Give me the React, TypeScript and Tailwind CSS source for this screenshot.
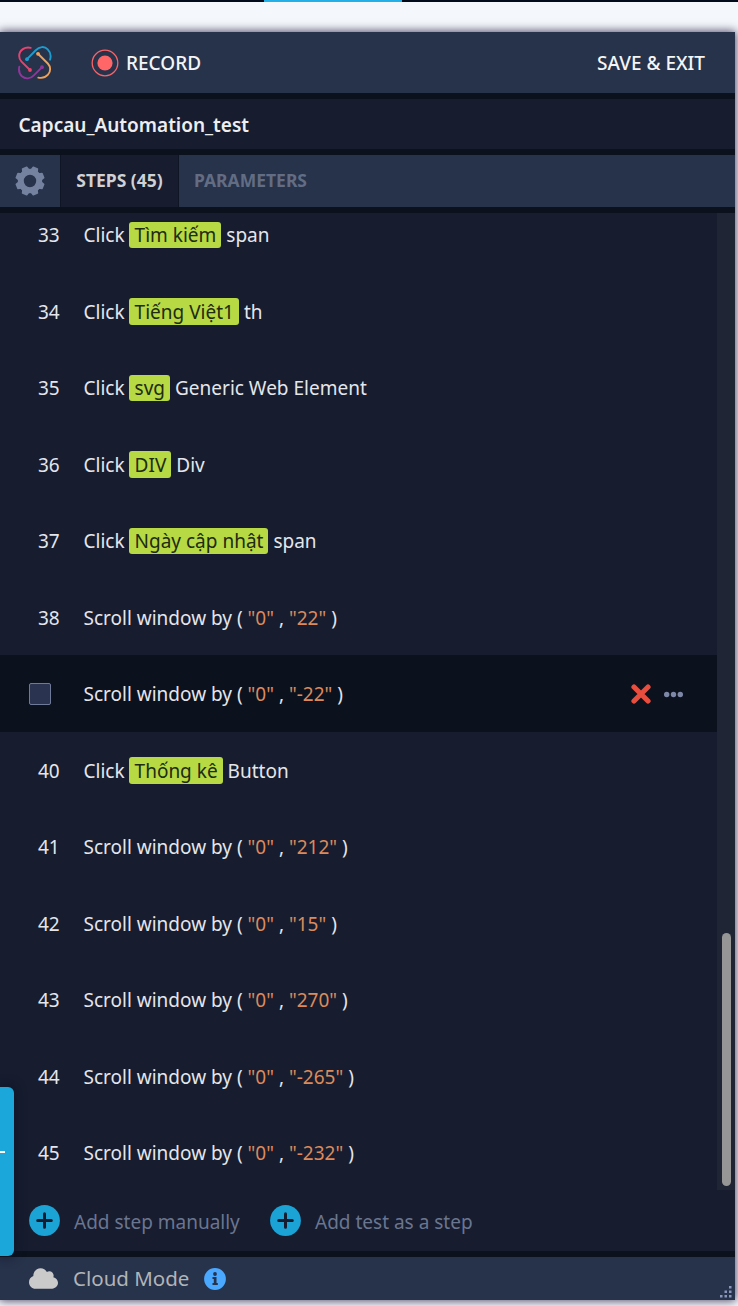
import { FaCloud } from "react-icons/fa";

type Step = { n: number; target?: string; kind?: string; args?: [string, string]; active?: boolean };

const steps: Step[] = [
  { n: 33, target: "Tìm kiếm", kind: "span" },
  { n: 34, target: "Tiếng Việt1", kind: "th" },
  { n: 35, target: "svg", kind: "Generic Web Element" },
  { n: 36, target: "DIV", kind: "Div" },
  { n: 37, target: "Ngày cập nhật", kind: "span" },
  { n: 38, args: ["0", "22"] },
  { n: 39, args: ["0", "-22"], active: true },
  { n: 40, target: "Thống kê", kind: "Button" },
  { n: 41, args: ["0", "212"] },
  { n: 42, args: ["0", "15"] },
  { n: 43, args: ["0", "270"] },
  { n: 44, args: ["0", "-265"] },
  { n: 45, args: ["0", "-232"] },
];

function Logo() {
  return (
    <svg className="h-9 w-9" viewBox="0 0 36 36" fill="none" strokeWidth="1.9" strokeLinecap="round">
      <path d="M13.800 2.800C8 1.400 2.200 5 2.200 11c0 2.500.8 4.200 2.300 5.700L13 25" stroke="#e8436f" />
      <path d="M10 14.200L18.500 5.500C22.500 1.300 27.500 1 30.700 4.300c3 3 3.500 6.800 2.300 10.400" stroke="#1b9dd0" />
      <path d="M21 8.800L30.800 18.500c3 3.200 3.200 8 .2 11.200-2.700 2.900-6.200 3.700-9.700 2.900" stroke="#eda25c" />
      <path d="M25 22.200L16.800 30.300c-3.500 3.800-8.600 4-11.900 1C2.200 28.600 1.500 25.200 2.300 21.600" stroke="#91359c" />
      <circle cx="13" cy="25" r="1.900" fill="#e8436f" stroke="none" />
      <circle cx="10" cy="14.200" r="1.900" fill="#1b9dd0" stroke="none" />
      <circle cx="21" cy="8.800" r="1.900" fill="#eda25c" stroke="none" />
      <circle cx="25" cy="22.200" r="1.900" fill="#91359c" stroke="none" />
    </svg>
  );
}

function Gear() {
  const teeth = [0, 45, 90, 135, 180, 225, 270, 315];
  return (
    <svg className="h-[30px] w-[30px]" viewBox="-15 -15 30 30">
      <circle r="9.200" fill="none" stroke="#75829f" strokeWidth="6" />
      {teeth.map((a) => (
        <path key={a} transform={`rotate(${a + 22.5})`} d="M-4 -10.500L-3 -14.200Q-2.800 -14.700 -2.200 -14.700H2.200Q2.800 -14.700 3 -14.200L4 -10.500Z" fill="#75829f" />
      ))}
    </svg>
  );
}

function Plus() {
  return (
    <svg className="h-[31px] w-[31px] shrink-0" viewBox="0 0 31 31">
      <circle cx="15.500" cy="15.500" r="15.400" fill="#1ba3d6" />
      <path d="M15.500 8.700v13.600M8.700 15.500h13.600" stroke="#171c2f" strokeWidth="3" strokeLinecap="round" />
    </svg>
  );
}

function StepRow({ step }: { step: Step }) {
  return (
    <div className={`flex h-[76.5px] shrink-0 items-center pt-[1.5px] pl-[29px] text-[19px] leading-[26px] ${step.active ? "bg-[#0c111e]" : ""}`}>
      <div className="w-[54.5px] shrink-0">
        {step.active ? (
          <div className="h-[22px] w-[22px] rounded-[2px] border border-[#6f7a99] bg-[#2a3450]" />
        ) : (
          <span className="pl-[9px]">{step.n}</span>
        )}
      </div>
      {step.target ? (
        <div className="flex items-center whitespace-nowrap">
          <span>Click</span>
          <span className="mr-[5px] ml-[4px] flex h-[26.5px] items-center rounded-[3px] bg-[#b7d944] pr-[5px] pl-[6px] text-[#202b12]">{step.target}</span>
          <span>{step.kind}</span>
        </div>
      ) : (
        <div className="whitespace-nowrap">
          Scroll window by ( <span className="text-[#dc8a5b]">"{step.args![0]}"</span> , <span className="text-[#dc8a5b]">"{step.args![1]}"</span> )
        </div>
      )}
      {step.active && (
        <div className="mr-[34px] ml-auto flex items-center gap-[13px]">
          <svg className="h-5 w-5" viewBox="0 0 20 20">
            <path d="M3 3L17 17M17 3L3 17" stroke="#e94d3d" strokeWidth="5.200" strokeLinecap="round" />
          </svg>
          <svg className="h-[7px] w-[19px]" viewBox="0 0 19 7" fill="#7d87a8">
            <circle cx="2.700" cy="3.500" r="2.700" />
            <circle cx="9.500" cy="3.500" r="2.700" />
            <circle cx="16.300" cy="3.500" r="2.700" />
          </svg>
        </div>
      )}
    </div>
  );
}

export default function App() {
  return (
    <div className="relative flex h-[1306px] w-[738px] flex-col overflow-hidden bg-[#f4f8fc] font-['Noto_Sans',sans-serif] text-[#e4e6eb]">
      <div className="flex h-[2px] shrink-0 bg-[#020b1b]">
        <div className="ml-[264px] w-[138px] bg-[#21b0e8]" />
      </div>
      <div className="mt-[30px] flex h-[1268px] w-[735px] shrink-0 flex-col bg-[#171c2f] shadow-[0_0_9px_1px_#514866]">
        <header className="flex h-[61px] shrink-0 items-center bg-[#27324b] pr-[30px] pl-[17px] text-[19px] font-medium text-[#f4f5f7]">
          <Logo />
          <svg className="ml-[38px] h-7 w-7" viewBox="0 0 28 28">
            <circle cx="14" cy="14" r="12.800" fill="none" stroke="#f96468" strokeWidth="1.300" />
            <circle cx="14" cy="14" r="7.600" fill="#ff6668" />
          </svg>
          <span className="ml-[7px] pt-[2px]">RECORD</span>
          <span className="ml-auto pt-[2px]">SAVE &amp; EXIT</span>
        </header>
        <div className="flex h-[62px] shrink-0 items-center border-y-[6px] border-[#0c111e] pt-[2px] pl-[18.5px] text-[19px] font-semibold text-[#eceef1]">
          Capcau_Automation_test
        </div>
        <nav className="flex h-[58px] shrink-0 border-b-[6px] border-[#0c111e] bg-[#27324b] text-[17.5px] font-bold">
          <div className="flex w-[60px] items-center justify-center">
            <Gear />
          </div>
          <div className="flex w-[119px] items-center justify-center border-x border-[#0f1523] bg-[#171c2f] pb-px text-[#cfd1d5]">STEPS (45)</div>
          <div className="flex items-center pb-px pl-[15px] text-[#626d83]">PARAMETERS</div>
        </nav>
        <main className="flex h-[977px] shrink-0 overflow-hidden">
          <div className="-mt-[17px] flex w-[717px] flex-col">
            {steps.map((s) => (
              <StepRow key={s.n} step={s} />
            ))}
          </div>
          <div className="flex grow flex-col items-center justify-end bg-[#1f2534] pb-1">
            <div className="h-[253px] w-[9px] rounded-full bg-[#969696]" />
          </div>
        </main>
        <div className="flex h-[61px] shrink-0 items-center pl-[29px] text-[19px] text-[#6a7690]">
          <Plus />
          <span className="ml-[14px] w-[196px] pt-[3px]">Add step manually</span>
          <Plus />
          <span className="ml-[14px] pt-[3px]">Add test as a step</span>
        </div>
        <footer className="flex h-[49px] shrink-0 items-center border-t-[6px] border-[#0c111e] bg-[#27324b] pr-[2px] pl-[29px] text-[20.5px] text-[#b2b4b8]">
          <FaCloud className="h-[29px] w-[29px] text-[#cacaca]" />
          <span className="ml-[15px]">Cloud Mode</span>
          <svg className="ml-[15px] h-[22px] w-[22px]" viewBox="0 0 22 22">
            <circle cx="11" cy="11" r="10.900" fill="#4ba8ff" />
            <circle cx="11" cy="6" r="1.900" fill="#27324b" />
            <path d="M8.500 9h4v6h1.300v2h-5.300v-2h1.300v-4H8.500z" fill="#27324b" />
          </svg>
          <svg className="mr-px mb-[2px] ml-auto h-3 w-3 self-end" viewBox="0 0 12 12" fill="#8b94bb">
            <path d="M9 0h2.500v2.500H9zM9 4.500h2.500V7H9zM9 9h2.500v2.500H9zM4.500 4.500H7V7H4.500zM4.500 9H7v2.500H4.500zM0 9h2.500v2.500H0z" />
          </svg>
        </footer>
      </div>
      <div className="absolute top-[1087px] left-0 flex h-[169px] w-[14px] items-start rounded-r-[6px] bg-[#1ca7db] pt-[64px] shadow-[0_0_12px_#0c1426]">
        <div className="h-[2px] w-[5px] bg-white" />
      </div>
    </div>
  );
}
